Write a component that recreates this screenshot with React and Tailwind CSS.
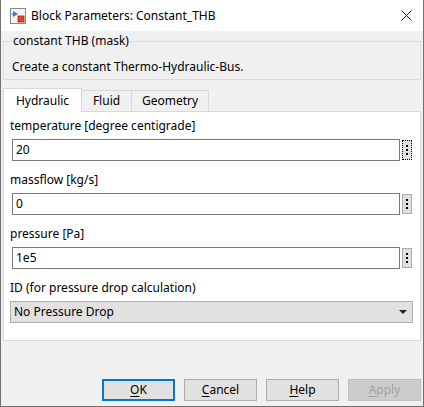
import { useState } from 'react'

const font = { fontFamily: '"Noto Sans", "Segoe UI", sans-serif' }

function BlockIcon() {
  return (
    <svg width="16" height="16" viewBox="0 0 16 16" className="shrink-0">
      <rect x="0.5" y="0.5" width="15" height="15" fill="#f4f4f4" stroke="#8a8a8a" />
      <path d="M3 3 L8 6 L3 9 Z" fill="#2a7fd4" />
      <path d="M3 6 H1.5" stroke="#2a7fd4" />
      <rect x="8" y="8" width="6" height="6" fill="#e8452c" stroke="#9c2a16" strokeWidth="0.8" />
    </svg>
  )
}

function DotsButton({ focused }) {
  return (
    <button
      className={
        'ml-[2px] flex h-[20px] w-[10px] flex-col items-center justify-center gap-[2px] bg-[#e1e1e1] ' +
        (focused ? 'border border-dotted border-black' : 'border border-[#adadad]')
      }
    >
      <span className="block h-[2px] w-[2px] bg-black" />
      <span className="block h-[2px] w-[2px] bg-black" />
      <span className="block h-[2px] w-[2px] bg-black" />
    </button>
  )
}

function Field({ label, value, focused }) {
  return (
    <div className="flex flex-col">
      <div className="h-[18px] pl-[6px] leading-[18px] text-black">{label}</div>
      <div className="flex items-center pl-[8px] pt-[4px]">
        <div className="flex h-[22px] w-[388px] items-center border border-[#7a7a7a] bg-white pl-[3px]">
          {value}
        </div>
        <DotsButton focused={focused} />
      </div>
    </div>
  )
}

export default function App() {
  const [tab, setTab] = useState('Hydraulic')
  const tabs = [
    { name: 'Hydraulic', w: 'w-[79px]' },
    { name: 'Fluid', w: 'w-[51px]' },
    { name: 'Geometry', w: 'w-[78px]' },
  ]

  return (
    <div
      className="flex h-[407px] w-[424px] flex-col border-x border-b border-[#707070] bg-[#f0f0f0] text-[12px] text-black"
      style={font}
    >
      {/* title bar */}
      <div className="flex h-[31px] shrink-0 items-center bg-white pl-[9px] pr-[10px]">
        <BlockIcon />
        <span className="ml-[5px] text-[12px]">Block Parameters: Constant_THB</span>
        <svg width="11" height="11" viewBox="0 0 11 11" className="ml-auto mr-[1px]">
          <path d="M0.5 0.5 L10.5 10.5 M10.5 0.5 L0.5 10.5" stroke="#222" strokeWidth="1" />
        </svg>
      </div>

      {/* mask description */}
      <fieldset className="mx-[2px] mt-[2px] h-[47px] border border-[#dcdcdc] px-[8px]">
        <legend className="px-[1px] text-[12px] leading-[16px]">constant THB (mask)</legend>
        <div className="mt-[10px] leading-[16px]">Create a constant Thermo-Hydraulic-Bus.</div>
      </fieldset>

      {/* tabs */}
      <div className="mt-[8px] flex h-[23px] items-end pl-[2px]">
        {tabs.map((t) => {
          const active = tab === t.name
          return (
            <button
              key={t.name}
              onClick={() => setTab(t.name)}
              className={
                t.w +
                ' flex items-center justify-center border border-b-0 ' +
                (active
                  ? 'relative z-10 -mb-[1px] h-[24px] border-[#d9d9d9] bg-white'
                  : '-ml-[1px] h-[21px] border-[#d9d9d9] bg-[#f0f0f0]')
              }
            >
              {t.name}
            </button>
          )
        })}
      </div>
      <div className="mx-[2px] flex h-[230px] flex-col gap-[10px] border border-[#d9d9d9] bg-white pt-[5px]">
        <Field label="temperature [degree centigrade]" value="20" focused />
        <Field label="massflow [kg/s]" value="0" />
        <Field label="pressure [Pa]" value="1e5" />
        <div className="flex flex-col">
          <div className="h-[18px] pl-[6px] leading-[18px]">ID (for pressure drop calculation)</div>
          <div className="ml-[6px] mt-[4px] flex h-[22px] w-[403px] items-center justify-between border border-[#adadad] bg-[#e1e1e1] pl-[3px] pr-[5px]">
            <span>No Pressure Drop</span>
            <svg width="8" height="4" viewBox="0 0 8 4">
              <path d="M0 0 H8 L4 4 Z" fill="#222" />
            </svg>
          </div>
        </div>
      </div>

      {/* buttons */}
      <div className="mt-auto mb-[5px] flex justify-end gap-[9px] pr-[2px]">
        <button className="flex h-[22px] w-[73px] items-center justify-center border-2 border-[#0078d7] bg-[#e1e1e1]">
          <span><span className="underline underline-offset-2">O</span>K</span>
        </button>
        <button className="flex h-[22px] w-[73px] items-center justify-center border border-[#adadad] bg-[#e1e1e1]">
          <span><span className="underline underline-offset-2">C</span>ancel</span>
        </button>
        <button className="flex h-[22px] w-[73px] items-center justify-center border border-[#adadad] bg-[#e1e1e1]">
          <span><span className="underline underline-offset-2">H</span>elp</span>
        </button>
        <button className="flex h-[22px] w-[73px] items-center justify-center border border-[#bfbfbf] bg-[#cccccc] text-[#a0a0a0]">
          <span><span className="underline underline-offset-2">A</span>pply</span>
        </button>
      </div>
    </div>
  )
}
